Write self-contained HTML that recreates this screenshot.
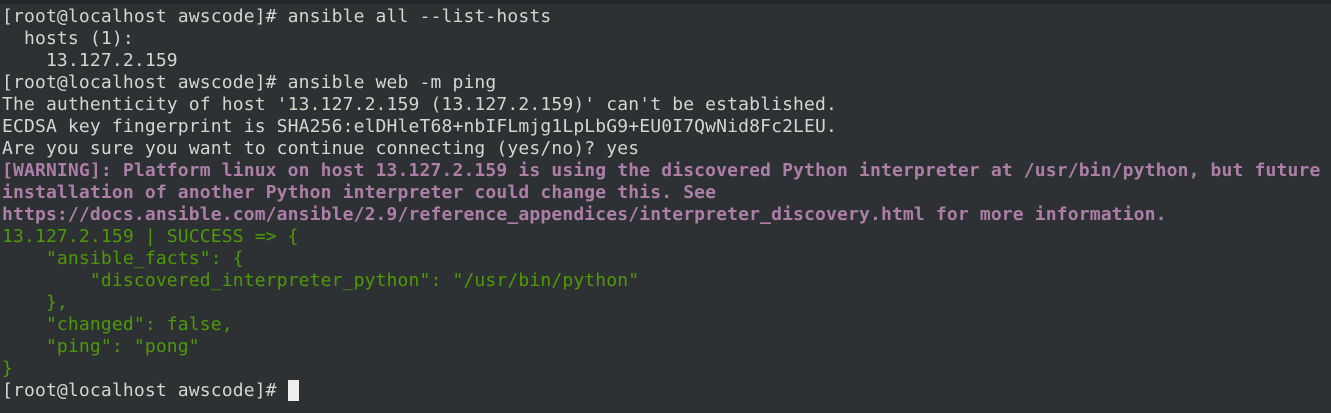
<!DOCTYPE html>
<html><head><meta charset="utf-8"><style>
html,body{margin:0;padding:0;}
body{width:1331px;height:413px;background:#2e3133;overflow:hidden;position:relative;}
.top{position:absolute;left:0;top:0;width:1331px;height:4px;background:#232527;}
pre{margin:0;position:absolute;left:2px;top:6px;font-family:"DejaVu Sans Mono","Liberation Mono",monospace;font-size:18px;letter-spacing:0.15px;line-height:22px;color:#d3d7cf;}
.w{color:#ad7fa8;font-weight:bold;}
.g{color:#4e9a06;}
.cur{display:inline-block;width:11px;height:21px;background:#eeeeec;vertical-align:top;}
</style></head><body><div class="top"></div><pre>[root@localhost awscode]# ansible all --list-hosts
  hosts (1):
    13.127.2.159
[root@localhost awscode]# ansible web -m ping
The authenticity of host '13.127.2.159 (13.127.2.159)' can't be established.
ECDSA key fingerprint is SHA256:elDHleT68+nbIFLmjg1LpLbG9+EU0I7QwNid8Fc2LEU.
Are you sure you want to continue connecting (yes/no)? yes
<span class="w">[WARNING]: Platform linux on host 13.127.2.159 is using the discovered Python interpreter at /usr/bin/python, but future
installation of another Python interpreter could change this. See
https://docs.ansible.com/ansible/2.9/reference_appendices/interpreter_discovery.html for more information.</span>
<span class="g">13.127.2.159 | SUCCESS =&gt; {
    "ansible_facts": {
        "discovered_interpreter_python": "/usr/bin/python"
    },
    "changed": false,
    "ping": "pong"
}</span>
[root@localhost awscode]# <span class="cur"></span></pre></body></html>
